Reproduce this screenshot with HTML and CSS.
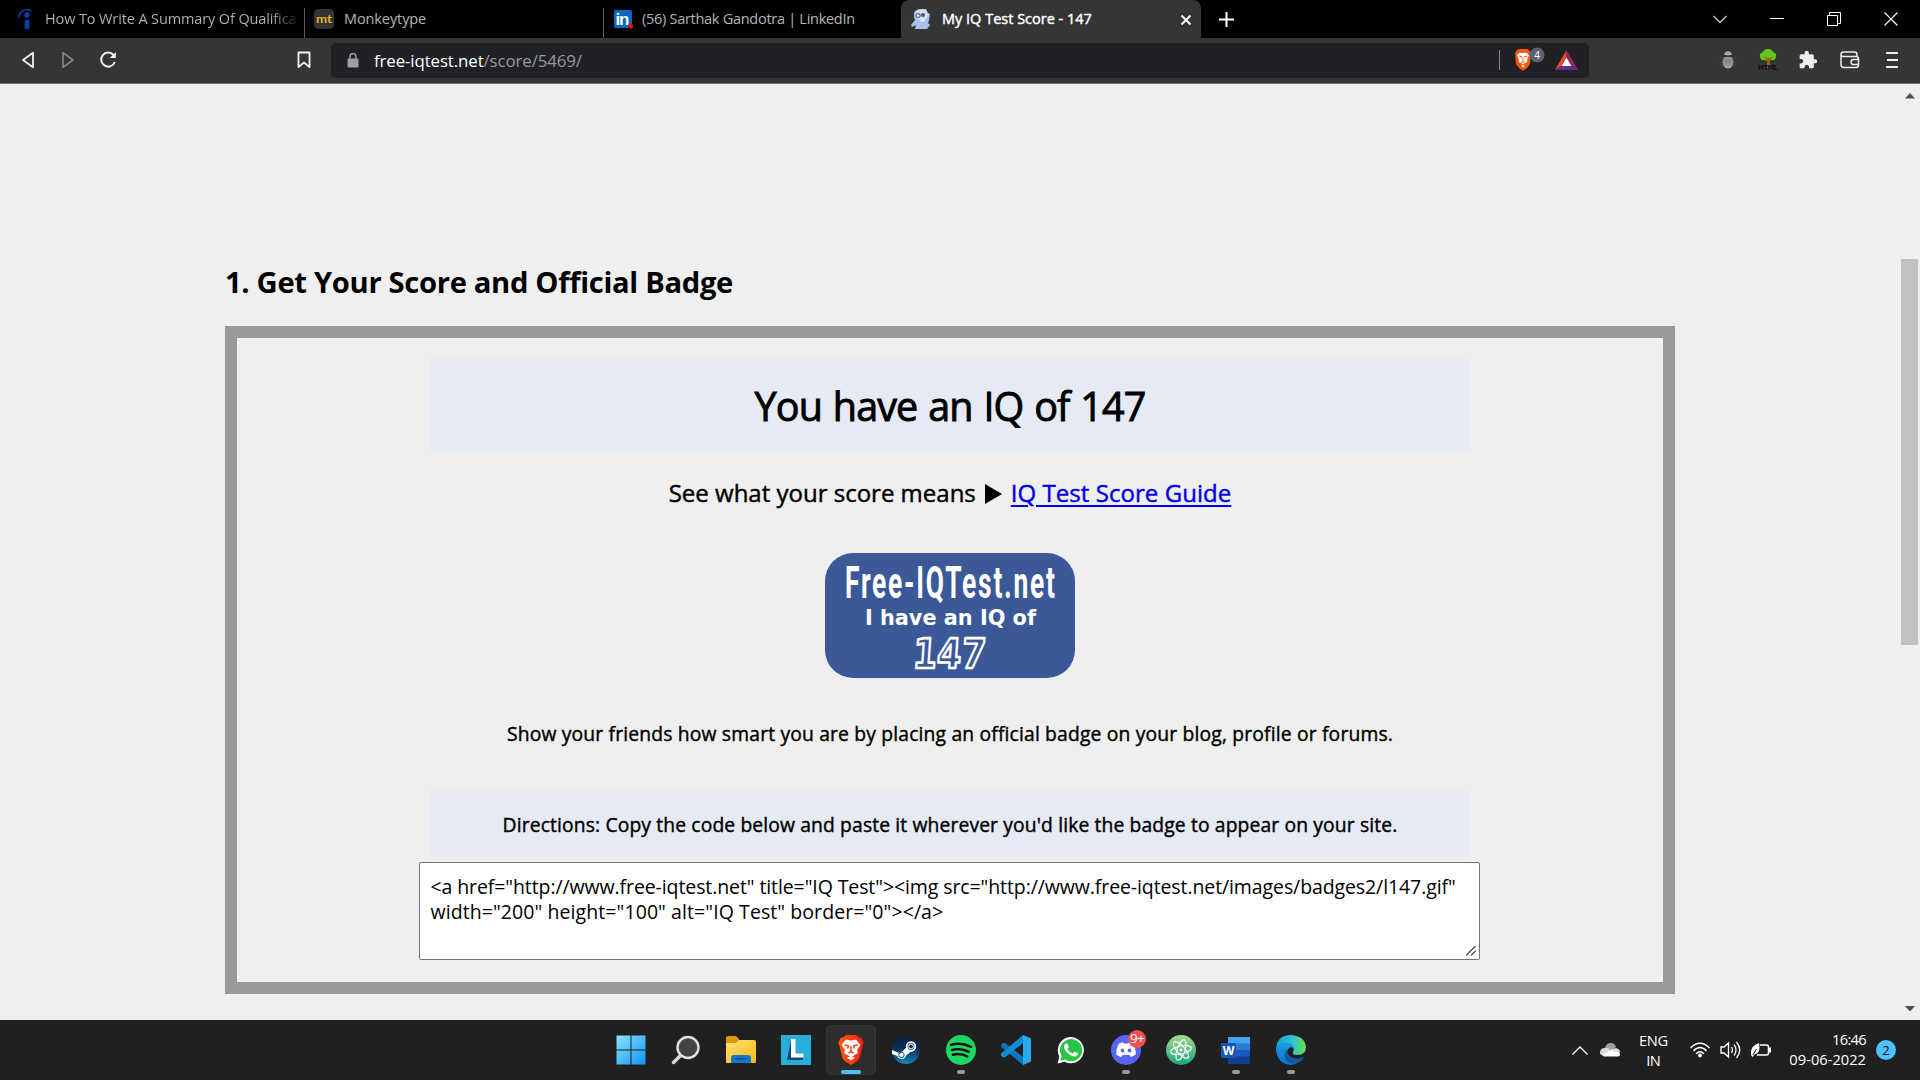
FILE: index.html
```
<!DOCTYPE html>
<html lang="en">
<head>
<meta charset="utf-8">
<title>My IQ Test Score - 147</title>
<link rel="stylesheet" href="styles.css">
</head>
<body>
<header class="tabs">
  <div class="tab tab-first">
    <svg class="fav" width="20" height="20" viewBox="0 0 20 20"><circle cx="12" cy="6" r="2.700" fill="#0b3fb0"/><path d="M9.700 10.400q2.500 1.200 4.600-.400V20H9.700z" fill="#0b3fb0"/><path d="M3.500 9Q5 1.500 10.500.800Q14 0 16 2" fill="none" stroke="#0b3fb0" stroke-width="1.500"/></svg>
    <span class="tab-title t1">How To Write A Summary Of Qualifica</span>
  </div>
  <div class="tab tab-mt">
    <svg class="fav" width="20" height="20" viewBox="0 0 20 20"><rect width="20" height="20" rx="4.500" fill="#323437"/><text x="2" y="14" class="mt" textLength="16" lengthAdjust="spacingAndGlyphs">mt</text></svg>
    <span class="tab-title t2">Monkeytype</span>
  </div>
  <div class="tab tab-in">
    <svg class="fav" width="20" height="20" viewBox="0 0 20 20"><rect y="1" width="18" height="18" rx="1.500" fill="#0a66c2"/><text x="1.500" y="16" class="in" textLength="14">in</text><circle cx="16.500" cy="17" r="2.600" fill="#d11124"/></svg>
    <span class="tab-title t3">(56) Sarthak Gandotra | LinkedIn</span>
  </div>
  <div class="tab tab-active">
    <svg class="fav" width="20" height="20" viewBox="0 0 20 20"><path d="M3 4Q5 0 10 0h5l2 4 2 1-1 6-1 3 2 2-3 4H4l1-4-4 2-1-2 4-5-1-3z" fill="#a9c3ea"/><path d="M4 3Q8-1 15 1l2 5q-1 4-4 5-7 1-9-4z" fill="#d5dfed"/><circle cx="7" cy="6.500" r="2.800" fill="#4d7fd0"/><circle cx="7" cy="6.500" r="1.200" fill="#fff"/><circle cx="12" cy="6" r="2" fill="#555"/><path d="M9 11l4-1 1 2-4 1z" fill="#e5edf8"/></svg>
    <span class="tab-title t4">My IQ Test Score - 147</span>
    <svg class="tab-close" width="12" height="12" viewBox="0 0 12 12"><path d="M1.500 1.500l9 9m0-9l-9 9" stroke="#fff" stroke-width="1.800"/></svg>
  </div>
  <svg class="newtab" width="15" height="15" viewBox="0 0 15 15"><path d="M7.500 0v15M0 7.500h15" stroke="#fff" stroke-width="2"/></svg>
  <div class="winctl">
    <svg width="14" height="14" viewBox="0 0 14 14"><path d="M.500 4L7 10.500 13.500 4" fill="none" stroke="#ddd" stroke-width="1.200"/></svg>
    <svg width="14" height="14" viewBox="0 0 14 14"><path d="M0 6.500h14" stroke="#fff"/></svg>
    <svg width="14" height="14" viewBox="0 0 14 14"><path d="M.500 3.500h10v10H.500zM2.500 3.500v-3h11v11h-3" fill="none" stroke="#fff"/></svg>
    <svg width="14" height="14" viewBox="0 0 14 14"><path d="M.500.500l13 13m0-13l-13 13" stroke="#fff" stroke-width="1.100"/></svg>
  </div>
</header>

<nav class="toolbar">
  <div class="navbtns">
    <svg width="14" height="18" viewBox="0 0 14 18"><path d="M12 1.700v14.600L2 9z" fill="none" stroke="#f0f0f0" stroke-width="1.800" stroke-linejoin="round"/></svg>
    <svg width="14" height="18" viewBox="0 0 14 18"><path d="M2 1.700v14.600L12 9z" fill="none" stroke="#888" stroke-width="1.600" stroke-linejoin="round"/></svg>
    <svg width="18" height="18" viewBox="0 0 18 18"><path d="M14.500 4A7 7 0 1 0 15.800 11" fill="none" stroke="#f0f0f0" stroke-width="2"/><path d="M16.800 1v6h-6z" fill="#f0f0f0"/></svg>
  </div>
  <svg class="bookmark" width="14" height="18" viewBox="0 0 14 18"><path d="M1.500 1.500h11v14.500L7 11.500 1.500 16z" fill="none" stroke="#eee" stroke-width="1.900" stroke-linejoin="round"/></svg>
  <div class="address">
    <svg class="lock" width="12" height="15" viewBox="0 0 12 15"><rect x=".500" y="5.500" width="11" height="9" rx="1" fill="#9aa0a6"/><path d="M3 6V3.500a3 3 0 0 1 6 0V6" fill="none" stroke="#9aa0a6" stroke-width="1.500"/></svg>
    <span class="url"><b>free-iqtest.net</b>/score/5469/</span>
    <span class="divider"></span>
    <svg class="shields" width="32" height="26" viewBox="0 0 32 26"><path d="M4 3l2-1h8l2 1 2 3-1 11-3 4-4 3-4-3-3-4L2 6z" fill="#ff5500"/><path d="M4 8l3-2.500 3 .700 3-.700 3 2.500-2 5 .500 2-3.500 1.500L10 18l-1-1.500-3.500-1.500.500-2z" fill="#fff"/><path d="M6 9l3 .800M14 9l-3 .800M10 10v4M8 15h4" stroke="#ff5500"/><path d="M8 19l2-1 2 1-2 1.500z" fill="#fff"/><circle cx="24" cy="8" r="7.500" fill="#5d6070"/><text x="24" y="12" class="count">4</text></svg>
    <svg class="bat" width="23" height="20" viewBox="0 0 23 20"><path d="M11.500 0v7L6 16 0 20z" fill="#ff4724"/><path d="M11.500 0L23 20l-6-4-5.500-9z" fill="#9e1f63"/><path d="M0 20l6-4h11l6 4z" fill="#662d91"/><path d="M11.500 7.500L16.500 16h-10z" fill="#fff"/></svg>
  </div>
  <div class="ext">
    <svg width="20" height="20" viewBox="0 0 20 20"><defs><linearGradient id="bug" x2="0" y2="1"><stop stop-color="#999"/><stop offset=".500" stop-color="#858585"/><stop offset="1" stop-color="#aaa"/></linearGradient></defs><path d="M2 7l4 2M1 12h4M3 17l3-3M18 7l-4 2M19 12h-4M17 17l-3-3" stroke="#484848"/><ellipse cx="10" cy="12" rx="5.500" ry="6.500" fill="url(#bug)"/><path d="M5 6.500h10" stroke="#353535"/><path d="M6.300 5a3.700 3.700 0 0 1 7.400 0z" fill="#aaa"/></svg>
    <svg width="20" height="22" viewBox="0 0 20 22"><path d="M9 9h3v10H9z" fill="#a55c17"/><path d="M2 7q-1-3 3-4 1-3 5-3t5 3q4 1 3 4 0 5-5 4-4 2-6 0-5 1-5-4z" fill="#62c41c"/><path d="M10.500 17V9M10.500 12L7 8M10.500 12L14 8" stroke="#a55c17" stroke-width="1.400"/><text x="0" y="20.500" class="html" textLength="20">HTML</text></svg>
    <svg width="20" height="20" viewBox="0 0 24 24"><path fill="#eee" d="M20.500 11H19V7c0-1.100-.900-2-2-2h-4V3.500C13 2.120 11.880 1 10.500 1S8 2.120 8 3.500V5H4c-1.100 0-1.990.900-1.990 2v3.800H3.500c1.490 0 2.700 1.210 2.700 2.700s-1.210 2.700-2.700 2.700H2V20c0 1.100.900 2 2 2h3.800v-1.500c0-1.490 1.210-2.700 2.700-2.700s2.700 1.210 2.700 2.700V22H17c1.100 0 2-.900 2-2v-4h1.500c1.380 0 2.500-1.120 2.500-2.500S21.880 11 20.500 11z"/></svg>
    <svg width="20" height="18" viewBox="0 0 20 18"><path d="M17 5.500V3.500Q17 1 14.500 1H3.500Q1 1 1 3.500v10Q1 16.500 4 16.500h12q2.500 0 2.500-2.500V8q0-2.500-2.500-2.500H3.500Q1 5.500 1 3.500M18.500 8.500h-5a2 2 0 0 0 0 5h5" fill="none" stroke="#eee" stroke-width="1.500"/></svg>
    <svg width="12" height="18" viewBox="0 0 12 18"><path d="M0 2h12M1 9h11M0 16h12" stroke="#eee" stroke-width="1.800"/></svg>
  </div>
</nav>

<div class="viewport">
  <main class="content">
    <h2 class="step-title">1. Get Your Score and Official Badge</h2>
    <section class="frame">
      <div class="panel score">You have an IQ of 147</div>
      <p class="guide"><span>See what your score means</span><svg width="17" height="20" viewBox="0 0 17 20"><path d="M0 0l17 10L0 20z"/></svg><a href="#">IQ Test Score Guide</a></p>
      <svg class="badge" width="250" height="125" viewBox="0 0 250 125">
        <rect width="250" height="125" rx="28" fill="#3b5998"/>
        <text class="badge-site" transform="translate(20 45) scale(.600 1)" textLength="350">Free-IQTest.net</text>
        <text class="badge-have" x="40" y="72" textLength="171" lengthAdjust="spacingAndGlyphs">I have an IQ of</text>
        <text class="badge-score" transform="translate(87 115) skewX(-4)" textLength="73" lengthAdjust="spacingAndGlyphs">147</text>
      </svg>
      <p class="show">Show your friends how smart you are by placing an official badge on your blog, profile or forums.</p>
      <div class="panel directions">Directions: Copy the code below and paste it wherever you'd like the badge to appear on your site.</div>
      <div class="code"><span class="c1">&lt;a href="http://www.free-iqtest.net" title="IQ Test"&gt;&lt;img src="http://www.free-iqtest.net/images/badges2/l147.gif"</span><span class="c2">width="200" height="100" alt="IQ Test" border="0"&gt;&lt;/a&gt;</span>
        <svg class="grip" width="10" height="10" viewBox="0 0 10 10"><path d="M0 9.500L9.500 0M5 9.500L9.500 5" stroke="#555" stroke-width="1.400"/></svg></div>
    </section>
  </main>
  <aside class="scrollbar">
    <svg width="10" height="6" viewBox="0 0 10 6"><path d="M5 0l5 5.500H0z" fill="#505050"/></svg>
    <div class="thumb"></div>
    <svg width="10" height="6" viewBox="0 0 10 6"><path d="M0 0h10L5 5.500z" fill="#505050"/></svg>
  </aside>
</div>

<footer class="taskbar">
  <div class="apps">
    <div class="app"><svg width="30" height="30" viewBox="0 0 30 30"><defs><linearGradient id="win" gradientUnits="userSpaceOnUse" x2="30" y2="30"><stop stop-color="#8fe4ff"/><stop offset="1" stop-color="#0a93f8"/></linearGradient></defs><path fill="url(#win)" d="M.500.500h14v14H.500zM15.500.500h14v14h-14zM.500 15.500h14v14H.500zM15.500 15.500h14v14h-14z"/></svg></div>
    <div class="app"><svg width="30" height="30" viewBox="0 0 30 30"><path d="M10 20l-7.500 7.500" stroke="#d6d6d6" stroke-width="3.500" stroke-linecap="round"/><circle cx="17" cy="12.500" r="10.500" fill="#444" stroke="#e2e2e2" stroke-width="2.400"/></svg></div>
    <div class="app"><svg width="32" height="30" viewBox="0 0 32 30"><defs><linearGradient id="fold" x2="1" y2="1"><stop stop-color="#ffe17c"/><stop offset="1" stop-color="#fbb90e"/></linearGradient></defs><path d="M1 3q0-2 2-2h8l3 3v6H1z" fill="#dc9a05"/><path d="M1 8h10l3-3h15q2 0 2 2v20q0 1-1 1H2q-1 0-1-1z" fill="url(#fold)"/><path d="M6 28v-5q0-3 3-3h14q3 0 3 3v5z" fill="#1377cd"/><path d="M10 23.700h12" stroke="#074b88" stroke-width="1.200"/></svg></div>
    <div class="app"><svg width="30" height="30" viewBox="0 0 30 30"><path fill="#27aedb" d="M0 0h30v30H0z"/><path d="M10 5L6 25l3 0L22 25v-3H12z" fill="#164777"/><path d="M10 4h4.500v14.500H22.500v4H10z" fill="#fff"/></svg></div>
    <div class="app active"><svg width="26" height="30" viewBox="0 0 26 30"><defs><linearGradient id="br" x2="1"><stop stop-color="#ff5a0a"/><stop offset="1" stop-color="#ff1d10"/></linearGradient></defs><path d="M5 2.500L8 0h10l3 2.500L23.500 3l2 5-1 3-3 12q-1 2-3 3.500L13 30l-5.500-3.500q-2-1.500-3-3.500l-3-12-1-3 2-5z" fill="url(#br)"/><path d="M8 4.500l5 1 5-1 4.500 5.500-3.500 5 1 3-5 3-2 1-2-1-5-3 1-3-3.500-5z" fill="#fff"/><path d="M6.500 10l4 1-1 2.500M19.500 10l-4 1 1 2.500M13 11v5M10.500 18l2.500-1.500 2.500 1.500" fill="none" stroke="#fb3d16" stroke-width="1.500"/><path d="M9 22.700l4-1.700 4 1.700-4 2.800z" fill="#fff"/></svg><i class="bar"></i></div>
    <div class="app"><svg width="28" height="28" viewBox="0 0 28 28"><defs><linearGradient id="st" x2="0" y2="1"><stop stop-color="#111d3b"/><stop offset=".500" stop-color="#0b315d"/><stop offset="1" stop-color="#1387b8"/></linearGradient></defs><circle cx="14" cy="14" r="14" fill="url(#st)"/><path d="M0 14l8 3.500 7-6.500 6 3-7 5.500q-1 3.500-4.500 3.500-3 0-4.200-3L0 18z" fill="#fff"/><circle cx="19" cy="10.500" r="4.300" fill="#0b315d" stroke="#fff" stroke-width="1.800"/><circle cx="19" cy="10.500" r="2.400" fill="none" stroke="#fff" stroke-width="1"/><circle cx="9.500" cy="19" r="2.700" fill="none" stroke="#0b4a79"/></svg></div>
    <div class="app"><svg width="30" height="30" viewBox="0 0 24 24"><circle cx="12" cy="12" r="12" fill="#1ed760"/><path d="M4 7.900q8.500-2.300 16 1.600M4.800 12q7.300-2 13.500 1.500M5.500 15.800q6.200-1.600 11.500 1.400" fill="none" stroke="#111" stroke-width="1.900" stroke-linecap="round"/></svg><i class="dot"></i></div>
    <div class="app"><svg width="30" height="30" viewBox="0 0 30 30"><path d="M0 10l2-2 2-.200L22 22v8L.300 12z" fill="#0878be"/><path d="M22 0v8L4 22.500H2L0 20.500v-2z" fill="#138bd0"/><path d="M22 0l8 3.500v23L22 30z" fill="#2aa9f3"/></svg></div>
    <div class="app"><svg width="28" height="28" viewBox="0 0 24 24"><path d="M.500 23.500L2 17.500A11.200 11.200 0 1 1 6.500 22z" fill="#fff"/><path d="M2.900 21.200l1-4.200A9.500 9.500 0 1 1 7 20.200z" fill="#28c445"/><path fill="#fff" d="M17.472 14.382c-.297-.149-1.758-.867-2.030-.967-.273-.099-.471-.148-.670.150-.197.297-.767.966-.940 1.164-.173.199-.347.223-.644.075-.297-.150-1.255-.463-2.390-1.475-.883-.788-1.480-1.761-1.653-2.059-.173-.297-.018-.458.130-.606.134-.133.298-.347.446-.520.149-.174.198-.298.298-.497.099-.198.050-.371-.025-.520-.075-.149-.669-1.612-.916-2.207-.242-.579-.487-.500-.669-.510-.173-.008-.371-.010-.570-.010-.198 0-.520.074-.792.372-.272.297-1.040 1.016-1.040 2.479 0 1.462 1.065 2.875 1.213 3.074.149.198 2.096 3.200 5.077 4.487.709.306 1.262.489 1.694.625.712.227 1.360.195 1.871.118.571-.085 1.758-.719 2.006-1.413.248-.694.248-1.289.173-1.413-.074-.124-.272-.198-.570-.347z"/></svg></div>
    <div class="app"><svg width="30" height="30" viewBox="0 0 30 30"><circle cx="15" cy="15" r="15" fill="#5865f2"/><path d="M8 8.500l4-1.300.800 1.300h4.400l.800-1.300 4 1.300q3 5 2.700 11-2 1.800-5 2.500l-1.200-2h-7l-1.200 2q-3-.700-5-2.500Q5 13.500 8 8.500z" fill="#fff"/><ellipse cx="11.500" cy="15.500" rx="1.800" ry="2" fill="#5865f2"/><ellipse cx="18.500" cy="15.500" rx="1.800" ry="2" fill="#5865f2"/></svg><span class="nine">9+</span><i class="dot"></i></div>
    <div class="app"><svg width="30" height="30" viewBox="0 0 30 30"><defs><linearGradient id="at" x2="0" y2="1"><stop stop-color="#a4d98c"/><stop offset="1" stop-color="#18a77a"/></linearGradient></defs><circle cx="15" cy="15" r="15" fill="url(#at)"/><g fill="none" stroke="#fff" stroke-width="1.200"><ellipse cx="15" cy="15" rx="10.500" ry="4" transform="rotate(-12 15 15)"/><ellipse cx="15" cy="15" rx="10.500" ry="4" transform="rotate(48 15 15)"/><ellipse cx="15" cy="15" rx="10.500" ry="4" transform="rotate(108 15 15)"/></g><circle cx="15" cy="15" r="1.500" fill="#fff"/></svg></div>
    <div class="app"><svg width="30" height="28" viewBox="0 0 30 28"><path d="M7 1h22v7H7z" fill="#41a5ee"/><path d="M7 7.500h22V14H7z" fill="#2b7cd3"/><path d="M7 14h22v7H7z" fill="#185abd"/><path d="M7 20.500h22V28H7z" fill="#103f91"/><rect y="7" width="15" height="15" rx="1" fill="#1a56b8"/><text x="7.500" y="18.500" class="w">W</text></svg><i class="dot"></i></div>
    <div class="app"><svg width="30" height="30" viewBox="0 0 30 30"><defs><linearGradient id="e1" x2="1"><stop stop-color="#1a9fe0"/><stop offset=".550" stop-color="#2fc4cf"/><stop offset="1" stop-color="#6be04a"/></linearGradient><linearGradient id="e2" x2="0" y2="1"><stop stop-color="#1b9de2"/><stop offset="1" stop-color="#0b6fd0"/></linearGradient></defs><path d="M0 14Q1 0 15 0q14 1 15 12 0 8-9 8-5 0-4-3 2-3-1-6Q8 4 0 14z" fill="url(#e1)"/><path d="M0 14Q4 6 12 8q6 1 6 6-2-3-5-1-3 3-1 8 3 7 11 6-4 3-8 3Q1 29 0 14z" fill="url(#e2)"/><path d="M11 14q-5 7 0 12 7 5 14 0 4-4 2.500-4-7 3-13-.500-4-3-3.500-7.500z" fill="#1256a0"/></svg><i class="dot"></i></div>
  </div>
  <div class="tray">
    <svg class="up" width="16" height="9" viewBox="0 0 16 9"><path d="M.500 8.500L8 1l7.500 7.500" fill="none" stroke="#fff" stroke-width="1.300"/></svg>
    <svg class="cloud" width="20" height="14" viewBox="0 0 20 14"><path d="M5 5q1-5 6-5 4 0 5 4l-6 5z" fill="#a0a0a0"/><path d="M0 10q0-5 5-5 3-1 5 2l6-2q4 1 4 4l-2 3H3q-3 0-3-2z" fill="#ddd"/><path d="M2 12.500l9-5.500q3 1 4 2 4-1 5 2 0 2.500-2 2.500H4z" fill="#fff"/></svg>
    <div class="lang"><span>ENG</span><span>IN</span></div>
    <svg class="wifi" width="20" height="16" viewBox="0 0 20 16"><g fill="none" stroke="#fff" stroke-width="1.500"><path d="M.500 6Q10-3.500 19.500 6M3.500 9Q10 2 16.500 9M6.200 11.800Q10 7.500 13.800 11.800"/></g><circle cx="10" cy="13.500" r="1.900" fill="#fff"/></svg>
    <svg class="vol" width="21" height="18" viewBox="0 0 21 18"><path d="M1 6h3l4.500-4v14L4 12H1zM11.500 6q2 3 0 6M14 3.500q4 5.500 0 11M16.500 1q6.500 8 0 16" fill="none" stroke="#fff" stroke-width="1.300"/></svg>
    <svg class="batt" width="20" height="16" viewBox="0 0 20 16"><path d="M9 3h6.500q2 0 2 2v6q0 2-2 2H6" fill="none" stroke="#fff" stroke-width="1.500"/><path d="M19 5.500v5" stroke="#fff" stroke-width="2"/><path d="M0 12Q-1 4 8 1q2 10-4.500 11.500L1.500 15 .500 14z" fill="#fff"/><path d="M2 13l3.500-6" stroke="#202020"/></svg>
    <div class="clock"><span class="time">16:46</span><span>09-06-2022</span></div>
    <span class="notif">2</span>
  </div>
</footer>
</body>
</html>
```
FILE: styles.css
```
* { box-sizing: border-box; }
body {
  margin: 0;
  width: 1920px;
  height: 1080px;
  overflow: hidden;
  display: flex;
  flex-direction: column;
  font-family: "Open Sans", "Noto Sans", sans-serif;
  background: #efefef;
  color: #000;
}
svg { display: block; flex: none; }
p, h2 { margin: 0; }

/* Tab strip */
.tabs { height: 38px; background: #000; display: flex; align-items: stretch; flex: none; }
.tab { display: flex; align-items: center; color: #b4b4b4; font-size: 14.5px; white-space: nowrap; flex: none; }
.tab-first { width: 304px; padding-left: 15px; }
.tab-mt { width: 299px; padding-left: 9px; }
.tab-in { width: 298px; padding-left: 10px; }
.tab-mt, .tab-in { border-left: 1px solid #555; border-image: linear-gradient(transparent 9px, #5a5a5a 9px) 1; }
.tab-active { width: 300px; padding-left: 10px; background: #353535; border-radius: 8px 8px 0 0; color: #fff; }
.tab-title { margin-left: 10px; line-height: 38px; }
.t1 { letter-spacing: -.12px; color: transparent; background: linear-gradient(90deg, #b4b4b4 225px, #111 253px); -webkit-background-clip: text; background-clip: text; }
.t2 { letter-spacing: -.1px; }
.t3 { letter-spacing: -.28px; margin-left: 8px; }
.t4 { letter-spacing: 0; margin-left: 11px; width: 238px; -webkit-text-stroke: .4px #fff; }
.tab-close { margin-top: 1px; }
.newtab { margin: 12px 0 0 18px; }
.winctl { margin: 12px 22px 0 auto; display: flex; gap: 43px; }
.mt { font: 700 11px "Lato", sans-serif; fill: #e2b714; }
.in { font: 700 17px "Liberation Sans", sans-serif; fill: #fff; }

/* Toolbar */
.toolbar { height: 46px; background: #353535; border-bottom: 1px solid #707070; display: flex; align-items: center; padding: 0 22px 1px 20px; flex: none; }
.navbtns { display: flex; gap: 26px; padding-left: 1px; }
.navbtns svg:last-child { margin-left: -2px; }
.bookmark { margin-left: 180px; margin-right: 20px; }
.address { width: 1258px; height: 35px; border-radius: 5px; background: #202124; display: flex; align-items: center; padding-left: 16px; }
.lock { margin-right: 15px; }
.url { font-size: 16.8px; letter-spacing: -.08px; color: #9a9a9a; flex: 1; }
.url b { font-weight: 400; color: #fff; }
.divider { width: 1px; height: 20px; background: #888; }
.shields { margin: 0 0 0 13px; }
.bat { margin: 0 11px 0 10px; }
.count { font: 10px "Open Sans", sans-serif; fill: #fff; text-anchor: middle; }
.ext { margin-left: auto; display: flex; align-items: center; gap: 20px; }
.ext svg:nth-child(4) { margin-left: 2px; }
.ext svg:last-child { margin-left: 6px; }
.html { font: 700 7px "DejaVu Sans", sans-serif; fill: #111; }

/* Page */
.viewport { flex: 1; display: flex; justify-content: space-between; min-height: 0; }
.content { padding: 178px 0 0 225px; width: 1675px; }
.step-title { font-size: 29.2px; font-weight: 700; line-height: 40px; margin-bottom: 24px; letter-spacing: -.33px; white-space: nowrap; }
.frame { height: 668px; border: 12px solid #999; padding-top: 21px; display: flex; flex-direction: column; align-items: center; }
.panel { width: 1040px; background: #e6eaf5; text-align: center; white-space: nowrap; }
.score { height: 92px; line-height: 95px; font-size: 39.5px; letter-spacing: -.9px; word-spacing: 1.5px; -webkit-text-stroke: .9px #000; }
.guide { display: flex; align-items: center; margin-top: 24px; line-height: 36px; font-size: 24px; -webkit-text-stroke: .45px currentColor; }
.guide svg { margin: 2px 9px 0; }
.guide a { color: #0000ee; letter-spacing: .05px; text-decoration-thickness: 2px; text-underline-offset: 3px; }
.badge { margin: 42px 0 41px; }
.badge-site { font: 700 44px "Roboto", sans-serif; fill: #fff; }
.badge-have { font: 700 22px "DejaVu Sans", sans-serif; fill: #fff; }
.badge-score { font: 700 41px "DejaVu Sans", sans-serif; fill: #3b5998; stroke: #fff; stroke-width: 2.6; stroke-linejoin: round; }
.show { position: relative; top: 1px; font-size: 19.3px; letter-spacing: .17px; line-height: 28px; margin-bottom: 44px; white-space: nowrap; -webkit-text-stroke: .4px #000; }
.directions { height: 66px; line-height: 67px; font-size: 19.3px; letter-spacing: .13px; -webkit-text-stroke: .4px #000; }
.code { position: relative; left: -1px; width: 1061px; height: 98px; margin-top: 5px; padding: 11px 11px; border: 1px solid #767676; border-radius: 2px; background: #fff; display: flex; flex-direction: column; font-size: 19.5px; line-height: 25px; white-space: nowrap; }
.c1 { letter-spacing: -.1px; }
.c2 { letter-spacing: .08px; }
.grip { position: absolute; right: 3px; bottom: 3px; }
.scrollbar { width: 20px; display: flex; flex-direction: column; align-items: center; padding: 9px 1px 8px 0; }
.thumb { width: 17px; height: 386px; background: #c1c1c1; margin: 160px 0 auto; }

/* Taskbar */
.taskbar { height: 60px; background: #202020; display: flex; flex: none; justify-content: space-between; align-items: center; padding: 0 24px 0 603px; }
.apps { display: flex; }
.app { position: relative; width: 55px; height: 60px; display: flex; align-items: center; justify-content: center; }
.active { width: 50px; height: 50px; margin: 5px 2px 5px 3px; background: #2d2d2d; border: 1px solid #373737; border-radius: 5px; }
.dot, .bar { position: absolute; left: 50%; transform: translateX(-50%); bottom: 6px; width: 8px; height: 4px; border-radius: 2px; background: #9a9a9a; }
.bar { width: 20px; bottom: 0; background: #4cc2ff; }
.nine { position: absolute; left: 30px; top: 10px; width: 18px; height: 18px; border-radius: 9px; background: #ed5350; color: #fff; font-size: 13.5px; line-height: 17px; text-align: center; letter-spacing: -.8px; }
.w { font: 700 12px "Open Sans", sans-serif; fill: #fff; text-anchor: middle; }
.tray { display: flex; align-items: center; color: #fff; font-size: 14.7px; line-height: 20px; }
.cloud { margin-left: 12px; }
.lang { margin: 0 23px 0 19px; width: 28px; display: flex; flex-direction: column; align-items: center; letter-spacing: -.4px; }
.vol { margin: 0 10px; }
.clock { margin: -2px 10px 0 18px; display: flex; flex-direction: column; align-items: flex-end; }
.time { letter-spacing: -.7px; }
.notif { width: 20px; height: 20px; border-radius: 50%; background: #4cc2ff; color: #111; font-size: 13px; text-align: center; }
```
